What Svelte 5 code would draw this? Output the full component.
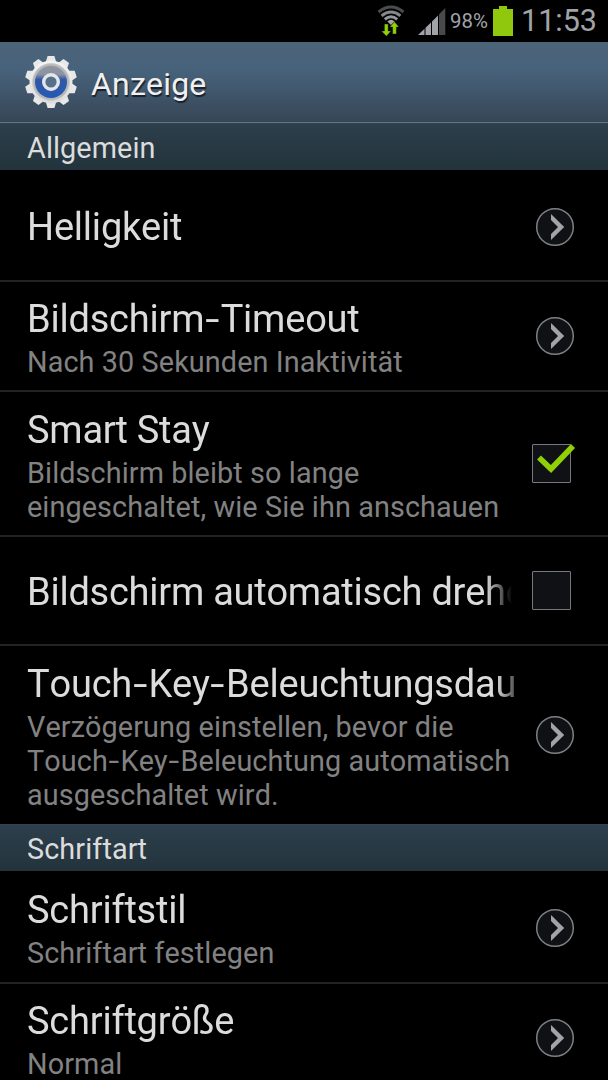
<script lang="ts">
    type Item = { title: string; lines?: string[]; control: 'arrow' | 'check'; checked?: boolean; height: number }
    type Section = { name: string; items: Item[] }

    let sections: Section[] = $state([
        {
            name: 'Allgemein',
            items: [
                { title: 'Helligkeit', control: 'arrow', height: 112 },
                { title: 'Bildschirm-Timeout', lines: ['Nach 30 Sekunden Inaktivität'], control: 'arrow', height: 110 },
                { title: 'Smart Stay', lines: ['Bildschirm bleibt so lange', 'eingeschaltet, wie Sie ihn anschauen'], control: 'check', checked: true, height: 145 },
                { title: 'Bildschirm automatisch drehen', control: 'check', checked: false, height: 109 },
                { title: 'Touch-Key-Beleuchtungsdauer', lines: ['Verzögerung einstellen, bevor die', 'Touch-Key-Beleuchtung automatisch', 'ausgeschaltet wird.'], control: 'arrow', height: 178 },
            ]
        },
        {
            name: 'Schriftart',
            items: [
                { title: 'Schriftstil', lines: ['Schriftart festlegen'], control: 'arrow', height: 113 },
                { title: 'Schriftgröße', lines: ['Normal'], control: 'arrow', height: 108 },
            ]
        }
    ])

    const teeth = Array.from({ length: 10 }, (_, i) => i * 36)
</script>

{#snippet label(text: string)}
    {#each text.split('-') as part, i}{#if i > 0}<span class="hyphen">-</span>{/if}{part}{/each}
{/snippet}

<div class="screen">
    <div class="status">
        <svg class="wifi" width="28" height="32" viewBox="0 0 28 32">
            <g fill="none" stroke-width="3">
                <path d="M1.5 7Q14 -3 26.5 7" stroke="#4b4c4e" />
                <path d="M4.6 10.8Q14 3.2 23.4 10.8" stroke="#85878a" />
                <path d="M7.8 14.4Q14 9.2 20.2 14.4" stroke="#94969a" />
            </g>
            <path d="M10.3 16.4Q14 13 17.7 16.4L14 20Z" fill="#a2a4a8" />
            <path d="M7.4 19h3.8v7h2.9l-4.7 5.2L4.4 26h3ZM15.6 29v-7h-3l4.9-5.2L22 22h-2.6v7Z" fill="#8fd006" stroke="#000" stroke-width=".4" />
        </svg>
        <svg class="signal" width="28" height="28" viewBox="0 0 28 28">
            <path d="M0 27L6.5 20.8V27ZM7.5 19.8L13 14.4V27H7.5ZM14 13.4L20 7.5V27h-6Z" fill="#a0a3a8" />
            <path d="M21 6.2L27.3 0V27H21Z" fill="#48494b" />
        </svg>
        <span class="percent">98%</span>
        <svg class="battery" width="20" height="30" viewBox="0 0 20 30">
            <path d="M0 3h6V0h8v3h6v27H0Z" fill="#8fc80c" />
        </svg>
        <span class="clock">11:53</span>
    </div>

    <header>
        <svg class="gear" width="54" height="56" viewBox="-27 -28 54 56">
            <defs>
                <linearGradient id="rim" x1="0" y1="0" x2="0" y2="1">
                    <stop offset="0" stop-color="#f4f4f4" />
                    <stop offset="1" stop-color="#dcdcdc" />
                </linearGradient>
                <linearGradient id="disc" x1="0" y1="0" x2="0" y2="1">
                    <stop offset="0" stop-color="#8f959c" />
                    <stop offset=".26" stop-color="#8b94a5" />
                    <stop offset=".42" stop-color="#3159a3" />
                    <stop offset="1" stop-color="#2558b5" />
                </linearGradient>
            </defs>
            <g fill="#e8e8e8">
                {#each teeth as angle}
                    <path d="M-5.2 -20L-3.4 -26H3.4L5.2 -20Z" transform="rotate({angle})" />
                {/each}
            </g>
            <circle r="21.5" fill="url(#rim)" />
            <circle r="18.4" fill="#b4b6b9" stroke="#cbccce" stroke-width="1" />
            <circle r="16" fill="url(#disc)" />
            <circle r="7.3" fill="#56708c" stroke="#e4e5e6" stroke-width="3.4" />
        </svg>
        <h1>Anzeige</h1>
    </header>

    {#each sections as section}
        <h2>{section.name}</h2>
        <div class="list">
            {#each section.items as item}
                <div class="row" style="height:{item.height}px">
                    <div class="text {item.control}">
                        <div class="title">{@render label(item.title)}</div>
                        {#each item.lines ?? [] as line}
                            <div class="sub">{@render label(line)}</div>
                        {/each}
                    </div>
                    {#if item.control === 'arrow'}
                        <svg class="go" width="40" height="40" viewBox="0 0 40 40">
                            <circle cx="20" cy="20" r="18.3" fill="#101114" stroke="#7d8084" stroke-width="1.5" />
                            <path d="M16 7L29.2 20L16 33V27L23 20L16 13Z" fill="#a2a4a8" />
                        </svg>
                    {:else}
                        <button aria-label={item.title} onclick={() => (item.checked = !item.checked)}>
                            {#if item.checked}
                                <svg width="46" height="40" viewBox="0 0 46 40">
                                    <path d="M8 14.5L20 26L42 3" fill="none" stroke="#8fd006" stroke-width="5.6" />
                                </svg>
                            {/if}
                        </button>
                    {/if}
                </div>
            {/each}
        </div>
    {/each}
</div>

<style>
    :global(body){background:#000;}
    .screen{width:608px;height:1080px;overflow:hidden;background:#000;color:#dcdcdc;font-family:Roboto,sans-serif;font-kerning:none;}
    .status{height:42px;display:flex;justify-content:flex-end;align-items:flex-start;padding-right:12px;box-sizing:border-box;color:#a0a3a8;}
    .wifi{margin:5px 13px 0 0;}
    .signal{margin:8px 4px 0 0;}
    .percent{font-size:20.4px;line-height:43px;width:39px;margin-right:4px;white-space:nowrap;}
    .battery{margin:6px 8px 0 0;}
    .clock{font-size:30.5px;line-height:42px;width:75px;white-space:nowrap;}
    header{height:81px;box-sizing:border-box;display:flex;align-items:center;gap:13px;padding-left:24px;background:linear-gradient(#4c6478,#47627b 35%,#374656);border-bottom:1px solid #69747e;}
    .gear{flex:none;}
    h1{margin:4px 0 0;font-size:32px;font-weight:400;color:#f0f0f0;letter-spacing:.2px;text-shadow:1px 2px 1px #17202a;}
    h2{margin:0;height:47px;line-height:49px;box-sizing:border-box;padding-left:27px;font-size:28.8px;font-weight:400;letter-spacing:.1px;color:#dcdcdc;background:linear-gradient(#2d3f4c,#22333c);border-top:1px solid #304452;}
    .row{box-sizing:border-box;display:flex;align-items:center;padding:1px 33px 0 27px;border-bottom:2px solid #232323;}
    .row:last-child{border-bottom:none;}
    .text{flex:none;width:489px;margin-right:19px;}
    .text.check{width:485px;margin-right:20px;}
    .title{font-size:38px;line-height:41px;padding:6px 0;letter-spacing:-.25px;white-space:nowrap;overflow:hidden;mask-image:linear-gradient(to right,#000 calc(100% - 26px),transparent);}
    .arrow .title{letter-spacing:-.22px;mask-image:linear-gradient(to right,#000 calc(100% - 20px),#0005);}
    .title:only-child{padding-top:9px;}
    .sub{font-size:28.8px;line-height:33.8px;letter-spacing:.1px;color:#828282;white-space:nowrap;}
    .hyphen{display:inline-block;transform:scaleX(1.35);margin:0 .09em 0 .07em;}
    .go{flex:none;margin-bottom:2px;}
    .row:first-child .go{margin:2px 0 0;}
    button{position:relative;flex:none;width:39px;height:39px;margin:0 0 2px;padding:0;background:#101114;border:1.5px solid #75787c;border-radius:1px;}
    button svg{position:absolute;left:-2px;top:-2px;}
</style>
